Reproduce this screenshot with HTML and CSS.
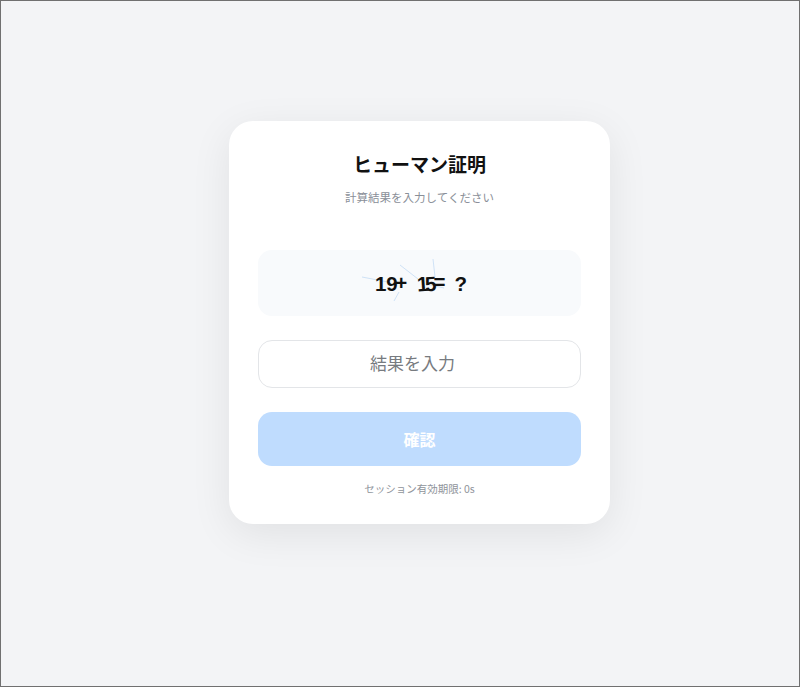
FILE: index.html
```html
<!DOCTYPE html>
<html lang="ja">
<head>
<meta charset="utf-8">
<title>ヒューマン証明</title>
<link rel="stylesheet" href="styles.css">
</head>
<body>
<div class="frame">
  <div class="card">
    <h1 class="title">ヒューマン証明</h1>
    <p class="subtitle">計算結果を入力してください</p>
    <div class="captcha">
      <svg class="noise" width="323" height="66" viewBox="0 0 323 66">
        <line x1="104" y1="27" x2="130" y2="32" />
        <line x1="142" y1="15" x2="160" y2="29" />
        <line x1="175" y1="9" x2="177" y2="27" />
        <line x1="141" y1="42" x2="136" y2="51" />
        <line x1="168" y1="34" x2="186" y2="38" />
      </svg>
      <div class="expr">
        <span class="ch">1</span><span class="ch">9</span><span class="ch plus">+</span><span class="ch one">1</span><span class="ch five">5</span><span class="ch eq">=</span><span class="ch q">?</span>
      </div>
    </div>
    <input class="answer" type="text" placeholder="結果を入力">
    <button class="submit" type="button">確認</button>
    <p class="footer">セッション有効期限: 0s</p>
  </div>
</div>
</body>
</html>
```

FILE: styles.css
```css
* { box-sizing: border-box; }
html, body {
  margin: 0;
  padding: 0;
}
body {
  font-family: "Noto Sans CJK JP", "Noto Sans", sans-serif;
  background: #f3f4f6;
}
.frame {
  width: 800px;
  height: 687px;
  border: 1px solid #707070;
  background: #f3f4f6;
  display: flex;
  justify-content: center;
  align-items: flex-start;
  padding: 120px 0 0 39px;
}
.card {
  width: 381px;
  background: #ffffff;
  border-radius: 24px;
  padding: 29px 29px 27px;
  box-shadow: 0 10px 40px rgba(0, 0, 0, 0.08);
  display: flex;
  flex-direction: column;
}
.title {
  margin: 0;
  font-size: 19px;
  line-height: 27px;
  font-weight: 700;
  color: #111111;
  text-align: center;
}
.subtitle {
  margin: 11px 0 0;
  font-size: 11.5px;
  line-height: 18px;
  color: #8a8f98;
  text-align: center;
}
.captcha {
  position: relative;
  margin-top: 44px;
  height: 66px;
  background: #f8fafc;
  border-radius: 14px;
  display: flex;
  align-items: center;
  justify-content: center;
  overflow: hidden;
}
.noise {
  position: absolute;
  left: 0;
  top: 0;
}
.noise line {
  stroke: #cfe2f6;
  stroke-width: 1;
}
.expr {
  position: relative;
  display: flex;
  align-items: baseline;
  font-family: "Liberation Sans", Arial, sans-serif;
  font-weight: 700;
  font-size: 20.5px;
  line-height: 24px;
  color: #111111;
  margin: 2px 0 0 3px;
}
.ch { display: inline-block; }
.plus { margin-left: -2.5px; transform: translateY(-1px); }
.one { margin-left: 9.6px; transform: rotate(-4deg); }
.five { margin-left: -3px; transform: rotate(-4deg); }
.eq { margin-left: -3px; transform: translateY(-2px); }
.q { margin-left: 9px; }
.answer {
  margin-top: 24px;
  height: 48px;
  width: 100%;
  border: 1px solid #e3e5e8;
  border-radius: 14px;
  background: #ffffff;
  font-family: "Noto Sans CJK JP", "Noto Sans", sans-serif;
  font-size: 17px;
  text-align: center;
  color: #111;
  outline: none;
  padding: 0 14px 3px 0;
}
.answer::placeholder { color: #777b80; }
.submit {
  margin-top: 24px;
  height: 54px;
  width: 100%;
  border: none;
  border-radius: 14px;
  background: #bfdcfe;
  color: #ffffff;
  font-family: "Noto Sans CJK JP", "Noto Sans", sans-serif;
  font-size: 16px;
  font-weight: 700;
}
.footer {
  margin: 15px 0 0;
  font-size: 10.5px;
  line-height: 16px;
  color: #8f949b;
  text-align: center;
}
```
